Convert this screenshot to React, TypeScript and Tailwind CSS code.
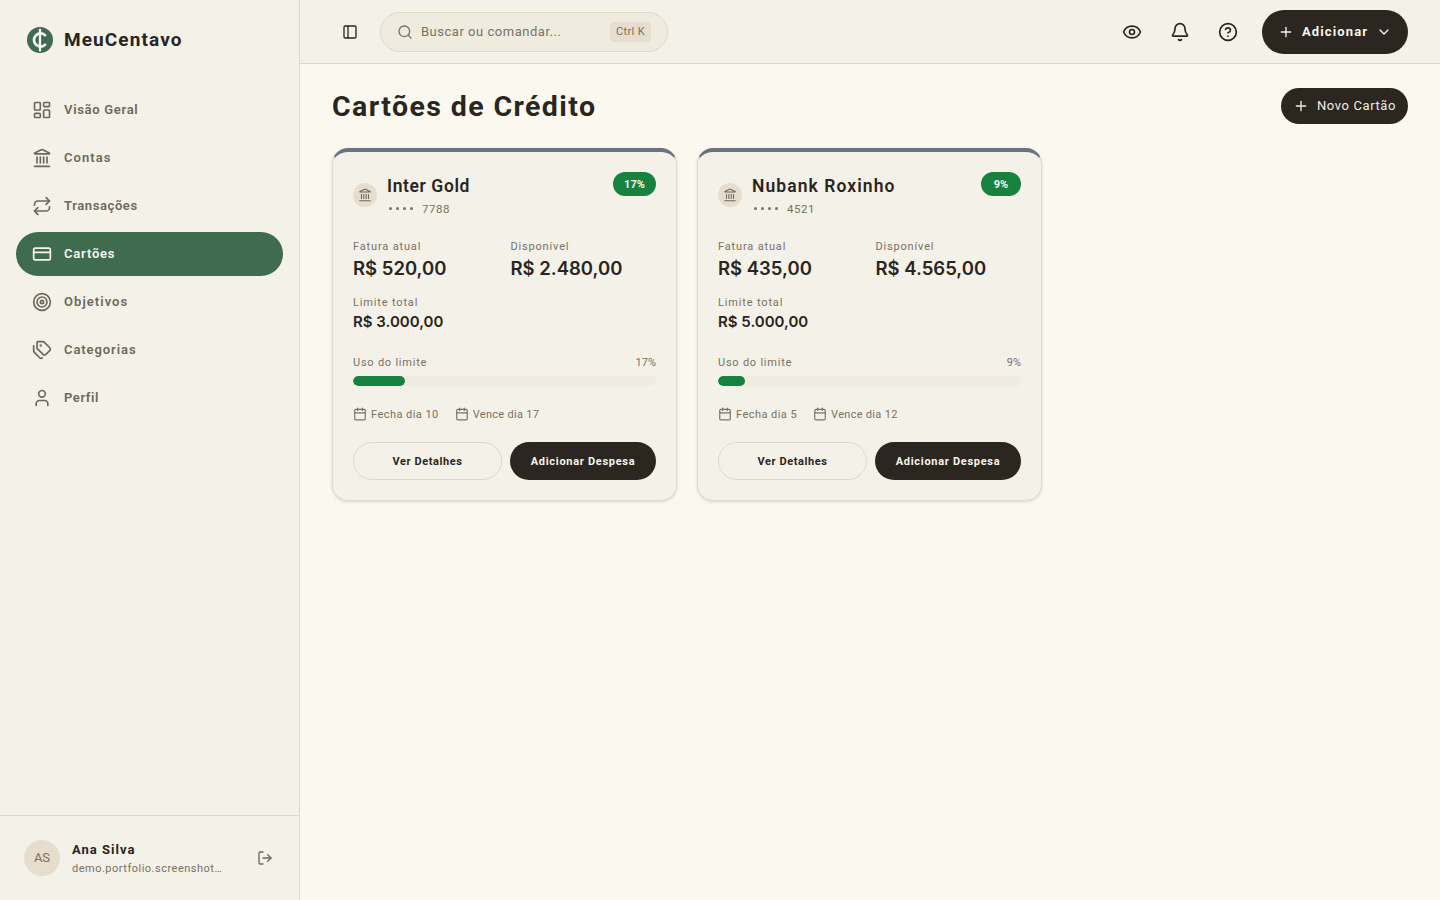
import React from "react";
import {
  Bell, Calendar, ChevronDown, CircleHelp, CreditCard, Eye, Landmark, LayoutDashboard,
  LogOut, PanelLeft, Plus, Repeat, Search, Tags, Target, User,
} from "lucide-react";

const nav = [
  { label: "Visão Geral", icon: LayoutDashboard, track: "tracking-[0.7px]" },
  { label: "Contas", icon: Landmark, track: "tracking-[1.05px]" },
  { label: "Transações", icon: Repeat, track: "tracking-[0.6px]" },
  { label: "Cartões", icon: CreditCard, track: "tracking-[0.8px]", active: true },
  { label: "Objetivos", icon: Target, track: "tracking-[1.05px]" },
  { label: "Categorias", icon: Tags, track: "tracking-[0.92px]" },
  { label: "Perfil", icon: User, track: "tracking-[0.6px]" },
];

const cards = [
  { name: "Inter Gold", track: "tracking-[0.6px]", badge: "w-[43px]", digits: "7788", pct: 17, bill: "520,00", free: "2.480,00", limit: "3.000,00", close: 10, due: 17 },
  { name: "Nubank Roxinho", track: "tracking-[1.08px]", badge: "w-10", digits: "4521", pct: 9, bill: "435,00", free: "4.565,00", limit: "5.000,00", close: 5, due: 12 },
];

function Logo() {
  return (
    <svg viewBox="0 0 26 26" className="size-[26px] shrink-0" fill="none">
      <circle cx="13" cy="13" r="13" fill="#3f6b4f" />
      <path d="M18.8 9A6.6 6.6 0 1 0 18.8 17" stroke="#f8f7ef" strokeWidth="2.7" />
      <path d="M13 1.8v22.6" stroke="#f8f7ef" strokeWidth="2.3" />
    </svg>
  );
}

function Sidebar() {
  return (
    <aside className="flex w-[300px] shrink-0 flex-col border-r border-[#dbd8cd] bg-[#f4f1e8]">
      <div className="flex h-20 items-center gap-[11px] pl-[27px]">
        <Logo />
        <span className="text-[19px] font-bold leading-7 tracking-[1.1px] text-[#292520]">MeuCentavo</span>
      </div>
      <nav className="flex flex-1 flex-col gap-1 px-4 pt-2">
        {nav.map(({ label, icon: Icon, track, active }) => (
          <a
            key={label}
            className={`flex h-11 items-center gap-3 rounded-full px-4 text-[13px] font-semibold leading-5 ${track} ${active ? "bg-[#3f6b4f] text-[#f8f7ef]" : "text-[#6d685b]"}`}
          >
            <Icon className="size-5" strokeWidth={2} />
            {label}
          </a>
        ))}
      </nav>
      <div className="flex h-[85px] items-center border-t border-[#dbd8cd] px-6">
        <div className="flex size-9 items-center justify-center rounded-full bg-[#e6ddcf] text-[13px] text-[#787265]">AS</div>
        <div className="ml-3 flex flex-col pt-0.5">
          <span className="text-[13px] font-bold leading-5 tracking-[1px] text-[#292520]">Ana Silva</span>
          <span className="text-[11px] leading-[18px] tracking-[0.5px] text-[#787265]">demo.portfolio.screenshot…</span>
        </div>
        <LogOut className="ml-auto mr-0.5 size-4 text-[#6d685b]" />
      </div>
    </aside>
  );
}

function TopBar() {
  return (
    <header className="flex h-16 items-center border-b border-[#dbd8cd] bg-[#f4f1e8] pl-[42px] pr-8 text-[#292520]">
      <PanelLeft className="size-4" />
      <div className="ml-[22px] flex h-10 w-[288px] items-center rounded-full border border-[#dcd7c6] bg-[#f0ebdf] pl-4 pr-4 text-[#787265]">
        <Search className="size-4" />
        <span className="ml-2 text-[13px] leading-5 tracking-[0.52px]">Buscar ou comandar...</span>
        <kbd className="ml-auto flex h-5 w-[41px] items-center justify-center rounded-[4px] bg-[#e6ddcf] pt-0.5 font-[Roboto] text-[11px] tracking-[0.4px]">Ctrl K</kbd>
      </div>
      <div className="ml-auto flex items-center gap-7">
        <Eye className="size-5" />
        <Bell className="size-5" />
        <CircleHelp className="size-5" />
      </div>
      <button className="ml-6 flex h-11 w-[146px] items-center rounded-full bg-[#2b2620] pl-4 pr-4 text-[#f8f5ec]">
        <Plus className="size-4" />
        <span className="ml-2 text-[13px] font-bold leading-5 tracking-[1.12px]">Adicionar</span>
        <ChevronDown className="ml-auto size-4" />
      </button>
    </header>
  );
}

function CreditCardPanel({ card }: { card: (typeof cards)[number] }) {
  return (
    <article className="flex h-[353px] flex-col rounded-2xl border border-t-4 border-[#dfdcd2] border-t-[#6b7280] bg-[#f4f1e8] px-5 pt-5 shadow-[0_1px_3px_rgba(60,50,30,0.16)]">
      <div className="flex h-[46px] items-start">
        <div className="mt-[11px] flex size-6 items-center justify-center rounded-full bg-[#e6ddcf] text-[#6d685b]">
          <Landmark className="size-3.5" strokeWidth={1.8} />
        </div>
        <div className="ml-2.5 flex flex-col">
          <h3 className={`text-[17.5px] font-semibold leading-7 text-[#292520] ${card.track}`}>{card.name}</h3>
          <p className="flex h-[18px] items-center text-[11.5px] tracking-[0.5px] text-[#787265]">
            <span className="mb-0.5 ml-0.5 flex gap-1">
              {[0, 1, 2, 3].map((i) => <i key={i} className="size-[3px] rounded-full bg-[#787265]" />)}
            </span>
            <span className="ml-[9px] pt-px">{card.digits}</span>
          </p>
        </div>
        <span className={`ml-auto flex h-6 items-center justify-center rounded-full bg-[#17823f] pt-0.5 text-[11px] font-bold text-[#f8f7ef] ${card.badge}`}>{card.pct}%</span>
      </div>
      <div className="mt-5 grid grid-cols-2 gap-x-3 gap-y-4">
        <div>
          <p className="pt-0.5 text-[11px] leading-[14px] tracking-[0.84px] text-[#787265]">Fatura atual</p>
          <p className="font-[Inter,sans-serif] text-[18.5px] font-semibold leading-7 text-[#292520]">R$ {card.bill}</p>
        </div>
        <div>
          <p className="pt-0.5 text-[11px] leading-[14px] tracking-[0.82px] text-[#787265]">Disponível</p>
          <p className="font-[Inter,sans-serif] text-[18.5px] font-semibold leading-7 text-[#292520]">R$ {card.free}</p>
        </div>
      </div>
      <div className="mt-3">
        <p className="pt-0.5 text-[11px] leading-[14px] tracking-[0.84px] text-[#787265]">Limite total</p>
        <p className="font-[Inter,sans-serif] text-[15px] font-semibold leading-6 text-[#292520]">R$ {card.limit}</p>
      </div>
      <div className="mt-5">
        <div className="flex justify-between pt-0.5 text-[11px] leading-[14px] tracking-[0.77px] text-[#787265]">
          <span>Uso do limite</span>
          <span className="tracking-normal">{card.pct}%</span>
        </div>
        <div className="mt-1.5 h-2.5 overflow-hidden rounded-full bg-[#efebe0]">
          <div className="h-full rounded-full bg-[#17823f]" style={{ width: `${card.pct}%` }} />
        </div>
      </div>
      <div className="mt-5 flex h-4 items-center gap-4 text-[11px] leading-4 tracking-[0.4px] text-[#787265]">
        <span className="flex items-center gap-1"><Calendar className="size-3.5" /><span className="pt-0.5 tracking-[0.45px]">Fecha dia {card.close}</span></span>
        <span className="flex items-center gap-1"><Calendar className="size-3.5" /><span className="pt-0.5 tracking-[0.3px]">Vence dia {card.due}</span></span>
      </div>
      <div className="mt-5 flex gap-2 text-[11px] font-bold">
        <button className="h-[38px] flex-1 rounded-full border border-[#dcd9ce] pt-0.5 tracking-[0.6px] text-[#292520]">Ver Detalhes</button>
        <button className="h-[38px] w-[146px] rounded-full bg-[#2b2620] pt-0.5 tracking-[0.7px] text-[#f8f5ec]">Adicionar Despesa</button>
      </div>
    </article>
  );
}

export default function App() {
  return (
    <div className="flex h-screen overflow-hidden bg-[#fbf8f0] font-[Roboto,sans-serif]">
      <Sidebar />
      <div className="flex flex-1 flex-col">
        <TopBar />
        <main className="px-8 pt-6">
          <div className="flex h-9 items-center justify-between">
            <h1 className="pt-0.5 text-[28.5px] font-bold leading-9 tracking-[1.4px] text-[#292520]">Cartões de Crédito</h1>
            <button className="flex h-9 w-[127px] items-center rounded-full bg-[#2b2620] pl-3 text-[13px] tracking-[0.6px] text-[#f0ece2]">
              <Plus className="mr-2 size-4" />
              Novo Cartão
            </button>
          </div>
          <div className="mt-6 grid grid-cols-[345px_345px] gap-5">
            {cards.map((card) => <CreditCardPanel key={card.name} card={card} />)}
          </div>
        </main>
      </div>
    </div>
  );
}
